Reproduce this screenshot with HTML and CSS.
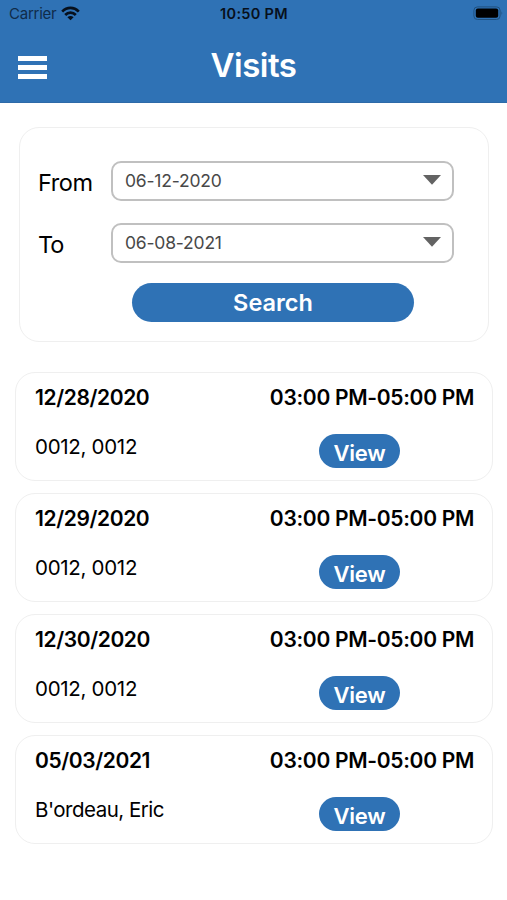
FILE: index.html
```html
<!DOCTYPE html>
<html lang="en">
<head>
<meta charset="utf-8">
<title>Visits</title>
<link rel="stylesheet" href="styles.css">
</head>
<body>
<header class="header">
  <div class="status">
    <div class="carrier"><span class="carrier-name">Carrier</span>
      <svg class="wifi" width="19" height="15" viewBox="0 0 19 15"><g fill="none" stroke="#07101c" stroke-width="2.7"><path d="M1.2 5.6C6 .7 13 .7 17.8 5.6"/><path d="M4.2 9C7.2 5.9 11.8 5.9 14.8 9"/></g><path d="M9.5 14.2L6.4 11.2C8.2 9.6 10.8 9.6 12.6 11.2Z" fill="#07101c"/></svg>
    </div>
    <span class="clock">10:50 PM</span>
    <svg class="battery" width="31" height="15" viewBox="0 0 31 15"><rect x=".9" y=".9" width="26.2" height="12.6" rx="3.5" fill="none" stroke="#20517f"/><rect x="2.8" y="2.6" width="22.4" height="9.2" rx="2" fill="#000"/><path d="M28.5 5.2Q30.3 7.2 28.5 9.2Z" fill="#20517f"/></svg>
  </div>
  <div class="navbar">
    <div class="menu"><i></i><i></i><i></i></div>
    <h1 class="title"><span>Visits</span></h1>
    <div></div>
  </div>
</header>
<main>
  <section class="filter">
    <div class="row"><label class="label from">From</label><div class="field"><span class="date">06-12-2020</span><svg width="18" height="10" viewBox="0 0 18 10"><path d="M0 0H18L9 9.7Z" fill="#636363"/></svg></div></div>
    <div class="row"><label class="label to">To</label><div class="field"><span class="date">06-08-2021</span><svg width="18" height="10" viewBox="0 0 18 10"><path d="M0 0H18L9 9.7Z" fill="#636363"/></svg></div></div>
    <button class="search"><span>Search</span></button>
  </section>
  <section class="list">
    <article class="card"><div class="top"><b class="day">12/28/2020</b><b class="time">03:00 PM-05:00 PM</b></div><div class="bottom"><span class="name">0012, 0012</span><button class="view"><span>View</span></button></div></article>
    <article class="card"><div class="top"><b class="day">12/29/2020</b><b class="time">03:00 PM-05:00 PM</b></div><div class="bottom"><span class="name">0012, 0012</span><button class="view"><span>View</span></button></div></article>
    <article class="card"><div class="top"><b class="day">12/30/2020</b><b class="time">03:00 PM-05:00 PM</b></div><div class="bottom"><span class="name">0012, 0012</span><button class="view"><span>View</span></button></div></article>
    <article class="card"><div class="top"><b class="day">05/03/2021</b><b class="time">03:00 PM-05:00 PM</b></div><div class="bottom"><span class="name tight">B'ordeau, Eric</span><button class="view"><span>View</span></button></div></article>
  </section>
</main>
</body>
</html>
```
FILE: styles.css
```css
* { box-sizing: border-box; }
body { margin: 0; background: #fff; color: #000; font-family: Inter, "Liberation Sans", sans-serif; white-space: nowrap; }
button { border: 0; padding: 0; font-family: inherit; color: #fff; background: #2f72b5; display: flex; justify-content: center; }
.header { height: 103px; background: #2f72b5; border-bottom: 1px solid #2d6aa8; }
.status { height: 27px; display: grid; grid-template-columns: 1fr auto 1fr; align-items: center; padding: 0 5px 0 9px; color: #07101c; font-size: 15px; }
.carrier { display: flex; align-items: center; gap: 5px; }
.carrier-name { color: #102c4a; letter-spacing: -.25px; }
.wifi { margin-top: -1px; }
.clock { font-weight: 600; font-size: 14.5px; letter-spacing: .3px; margin-right: 3px; }
.battery { justify-self: end; margin-top: -1px; margin-right: -2px; }
.navbar { height: 75px; display: grid; grid-template-columns: 1fr auto 1fr; padding: 0 18px; }
.menu { width: 29px; display: flex; flex-direction: column; gap: 4px; padding-top: 29px; }
.menu i { height: 5px; background: #fff; }
.title { margin: 0; padding-top: 18px; line-height: 40px; font-size: 33px; font-weight: 600; letter-spacing: -.5px; color: #fff; }
.filter { margin: 24px 18px 0 19px; height: 215px; border: 1px solid #efefef; border-radius: 20px; padding: 33px 34px 0 18px; }
.row { display: flex; height: 40px; margin-bottom: 22px; }
.label { width: 73px; font-size: 23.5px; line-height: 43px; letter-spacing: -.4px; }
.to { letter-spacing: -1.2px; }
.field { flex: 1; height: 40px; border: 2px solid #c0c0c0; border-radius: 10px; display: flex; align-items: center; justify-content: space-between; padding: 0 11px 2px 12px; }
.date { font-size: 17.5px; letter-spacing: -.2px; color: #484848; }
.search { width: 282px; height: 39px; margin: -2px 0 0 94px; border-radius: 20px; font-size: 23.5px; font-weight: 600; line-height: 39px; }
.list { display: flex; flex-direction: column; gap: 12px; margin: 30px 14px 0 15px; }
.card { height: 109px; border: 1px solid #efefef; border-radius: 20px; padding: 0 18px 0 19px; }
.top { display: flex; justify-content: space-between; padding-top: 10px; font-size: 21px; line-height: 30px; }
.top b { font-weight: 600; letter-spacing: -.3px; }
.top .day { letter-spacing: -.4px; }
.bottom { display: flex; justify-content: space-between; padding: 21px 74px 0 0; }
.name { font-size: 20.5px; line-height: 25px; letter-spacing: -.3px; }
.tight { letter-spacing: -.5px; }
.view { width: 81px; height: 34px; border-radius: 17px; font-size: 22px; font-weight: 600; letter-spacing: -.2px; line-height: 38px; }
```
